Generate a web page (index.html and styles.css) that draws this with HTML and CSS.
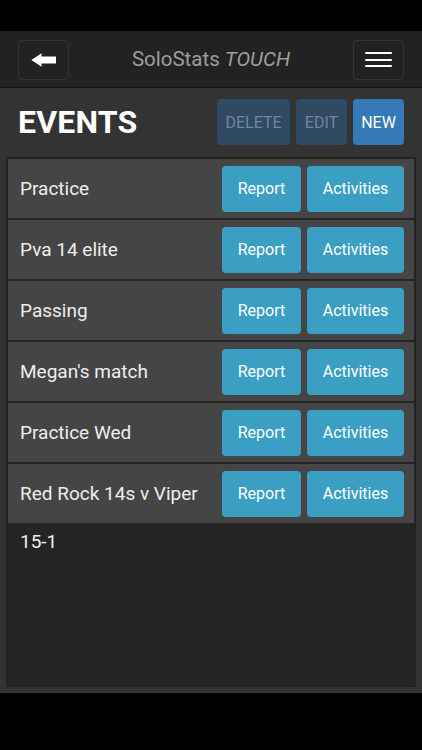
FILE: index.html
```html
<!DOCTYPE html>
<html lang="en">
<head>
	<meta charset="UTF-8">
	<title>SoloStats TOUCH - Events</title>
	<link rel="stylesheet" href="styles.css">
</head>
<body>
<div class="app">
	<div class="statusBar"></div>
	<div class="topBar">
		<button class="navBtn" type="button">
			<svg width="25" height="14" viewBox="0 0 25 14"><path d="M0.3 7 L10.5 0.2 L10.5 3.5 L24.5 3.5 Q25 3.5 25 4 L25 10 Q25 10.5 24.5 10.5 L10.5 10.5 L10.5 13.8 Z" fill="#fff"/></svg>
		</button>
		<div class="brand">SoloStats <em>TOUCH</em></div>
		<button class="navBtn menuBtn" type="button">
			<span class="bar"></span>
			<span class="bar"></span>
			<span class="bar"></span>
		</button>
	</div>
	<div class="main">
		<div class="pageHead">
			<h1>EVENTS</h1>
			<div class="tools">
				<button class="btn btnOff" type="button">DELETE</button>
				<button class="btn btnOff" type="button">EDIT</button>
				<button class="btn btnNew" type="button">NEW</button>
			</div>
		</div>
		<div class="panel">
			<ul class="events">
				<li><span class="name">Practice</span><button class="btn btnInfo report" type="button">Report</button><button class="btn btnInfo acts" type="button">Activities</button></li>
				<li><span class="name">Pva 14 elite</span><button class="btn btnInfo report" type="button">Report</button><button class="btn btnInfo acts" type="button">Activities</button></li>
				<li><span class="name">Passing</span><button class="btn btnInfo report" type="button">Report</button><button class="btn btnInfo acts" type="button">Activities</button></li>
				<li><span class="name">Megan's match</span><button class="btn btnInfo report" type="button">Report</button><button class="btn btnInfo acts" type="button">Activities</button></li>
				<li><span class="name">Practice Wed</span><button class="btn btnInfo report" type="button">Report</button><button class="btn btnInfo acts" type="button">Activities</button></li>
				<li><span class="name">Red Rock 14s v Viper</span><button class="btn btnInfo report" type="button">Report</button><button class="btn btnInfo acts" type="button">Activities</button></li>
			</ul>
			<div class="note">15-1</div>
		</div>
	</div>
	<div class="bottomBar"></div>
</div>
</body>
</html>
```

FILE: styles.css
```css
* {
	box-sizing: border-box;
}
body {
	margin: 0;
	background: #000;
	font-family: Roboto, "Liberation Sans", sans-serif;
}
.app {
	display: flex;
	flex-direction: column;
	height: 750px;
}
.statusBar {
	height: 31px;
	background: #000;
}
.topBar {
	height: 57px;
	background: #222;
	border-bottom: 1px solid #111;
	display: flex;
	align-items: center;
	justify-content: space-between;
	padding: 0 18px;
}
.navBtn {
	width: 51px;
	height: 40px;
	margin-top: 1px;
	border: 1px solid #353535;
	border-radius: 4px;
	background: transparent;
	display: flex;
	align-items: center;
	justify-content: center;
	padding: 0;
	cursor: pointer;
}
.menuBtn {
	flex-direction: column;
	gap: 4.5px;
}
.menuBtn .bar {
	display: block;
	width: 27px;
	height: 2px;
	background: #fff;
	border-radius: 1px;
}
.brand {
	color: #9d9d9d;
	font-size: 20.5px;
}
.brand em {
	font-style: italic;
}
.main {
	flex: 1;
	background: #333;
	display: flex;
	flex-direction: column;
	padding-bottom: 6px;
}
.pageHead {
	display: flex;
	align-items: center;
	justify-content: space-between;
	padding: 11px 18px 0 18px;
	margin-bottom: 12px;
}
h1 {
	margin: 0;
	color: #fff;
	font-size: 32px;
	font-weight: bold;
	letter-spacing: 0.2px;
}
.tools {
	display: flex;
	gap: 6px;
}
.btn {
	height: 46px;
	border: none;
	border-radius: 4px;
	font-family: Roboto, "Liberation Sans", sans-serif;
	font-size: 16px;
	padding: 0;
	cursor: pointer;
}
.btnOff {
	background: #2f4a62;
	color: #73869a;
}
.tools .btnOff:first-child {
	width: 73px;
}
.tools .btnOff + .btnOff {
	width: 51px;
}
.btnNew {
	width: 51px;
	background: #337ab7;
	color: #fff;
}
.panel {
	flex: 1;
	margin: 0 6px;
	border: 2px solid #222;
	background: #242424;
}
.events {
	margin: 0;
	padding: 0;
}
.events li {
	list-style: none;
	height: 59px;
	margin-bottom: 2px;
	background: #454545;
	display: flex;
	align-items: center;
	padding: 0 10px 0 12px;
	gap: 6px;
}
.events li:last-child {
	margin-bottom: 0;
}
.name {
	flex: 1;
	color: #eee;
	font-size: 19px;
}
.btnInfo {
	background: #3a9fc3;
	color: #fff;
}
.report {
	width: 79px;
}
.acts {
	width: 97px;
}
.note {
	color: #eee;
	font-size: 19px;
	padding: 7px 12px;
}
.bottomBar {
	height: 57px;
	background: #000;
}
```
